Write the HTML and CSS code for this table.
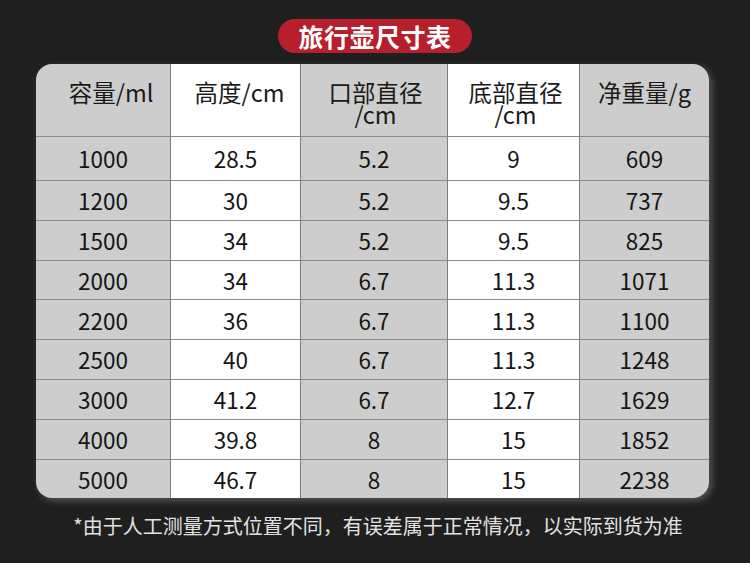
FILE: index.html
```html
<!DOCTYPE html>
<html lang="zh-CN">
<head>
<meta charset="utf-8">
<title>旅行壶尺寸表</title>
<link rel="stylesheet" href="styles.css">
</head>
<body>
<div class="page">
  <div class="title-row"><h1 class="badge">旅行壶尺寸表</h1></div>
  <div class="sheet">
    <div class="cell head c1 first"><span class="ln">容量/ml</span></div>
    <div class="cell head c2"><span class="ln">高度/cm</span></div>
    <div class="cell head c3"><span class="ln">口部直径</span><span class="ln">/cm</span></div>
    <div class="cell head c4"><span class="ln">底部直径</span><span class="ln">/cm</span></div>
    <div class="cell head c5"><span class="ln">净重量/g</span></div>

    <div class="cell c1 first">1000</div><div class="cell c2">28.5</div><div class="cell c3">5.2</div><div class="cell c4">9</div><div class="cell c5">609</div>
    <div class="cell c1 first">1200</div><div class="cell c2">30</div><div class="cell c3">5.2</div><div class="cell c4">9.5</div><div class="cell c5">737</div>
    <div class="cell c1 first">1500</div><div class="cell c2">34</div><div class="cell c3">5.2</div><div class="cell c4">9.5</div><div class="cell c5">825</div>
    <div class="cell c1 first">2000</div><div class="cell c2">34</div><div class="cell c3">6.7</div><div class="cell c4">11.3</div><div class="cell c5">1071</div>
    <div class="cell c1 first">2200</div><div class="cell c2">36</div><div class="cell c3">6.7</div><div class="cell c4">11.3</div><div class="cell c5">1100</div>
    <div class="cell c1 first">2500</div><div class="cell c2">40</div><div class="cell c3">6.7</div><div class="cell c4">11.3</div><div class="cell c5">1248</div>
    <div class="cell c1 first">3000</div><div class="cell c2">41.2</div><div class="cell c3">6.7</div><div class="cell c4">12.7</div><div class="cell c5">1629</div>
    <div class="cell c1 first">4000</div><div class="cell c2">39.8</div><div class="cell c3">8</div><div class="cell c4">15</div><div class="cell c5">1852</div>
    <div class="cell c1 first">5000</div><div class="cell c2">46.7</div><div class="cell c3">8</div><div class="cell c4">15</div><div class="cell c5">2238</div>
  </div>
  <p class="note">*由于人工测量方式位置不同，有误差属于正常情况，以实际到货为准</p>
</div>
</body>
</html>
```

FILE: styles.css
```css
html, body {
  margin: 0;
  padding: 0;
  background: #1f1f1f;
}

.page {
  width: 750px;
  height: 563px;
  padding-top: 19px;
  box-sizing: border-box;
  font-family: "Noto Sans CJK SC", "Noto Sans", sans-serif;
}

.title-row {
  display: flex;
  justify-content: center;
}

.badge {
  margin: 0;
  width: 194px;
  height: 34px;
  border-radius: 17px;
  background: #b61f2b;
  color: #ffffff;
  font-size: 25px;
  font-weight: 700;
  line-height: 34px;
  text-align: center;
  letter-spacing: 0.5px;
}

.sheet {
  margin: 11px 0 0 36px;
  width: 673px;
  display: grid;
  grid-template-columns: 134px 130px 147px 132px 130px;
  grid-template-rows: 72px 44px repeat(8, 39.8px);
  border-radius: 16px;
  overflow: hidden;
  box-shadow: 3px 3px 7px rgba(150, 150, 150, 0.45);
}

.cell {
  box-sizing: border-box;
  border-top: 1px solid #8a8a8a;
  border-left: 1px solid #7c7c7c;
  display: flex;
  align-items: center;
  justify-content: center;
  font-size: 22.5px;
  color: #151515;
  line-height: 1;
}

.cell.first {
  border-left: none;
}

.cell.head {
  border-top: none;
  flex-direction: column;
  align-items: center;
  justify-content: flex-start;
  padding-top: 17px;
  font-size: 23.5px;
  text-align: center;
  color: #1a1a1a;
}

.ln {
  display: block;
  height: 22px;
  line-height: 22px;
}

.head.c1 { padding-left: 16px; }
.head.c2 { padding-left: 8px; }
.head.c3 { padding-left: 3px; }
.head.c4 { padding-left: 4px; }

.c1, .c3, .c5 { background: #cdcdcd; }
.c2, .c4 { background: #ffffff; }

.note {
  margin: 16px 0 0 0;
  text-align: center;
  color: #e2e2e2;
  font-size: 20px;
  line-height: 24px;
  padding-left: 6px;
}
```
